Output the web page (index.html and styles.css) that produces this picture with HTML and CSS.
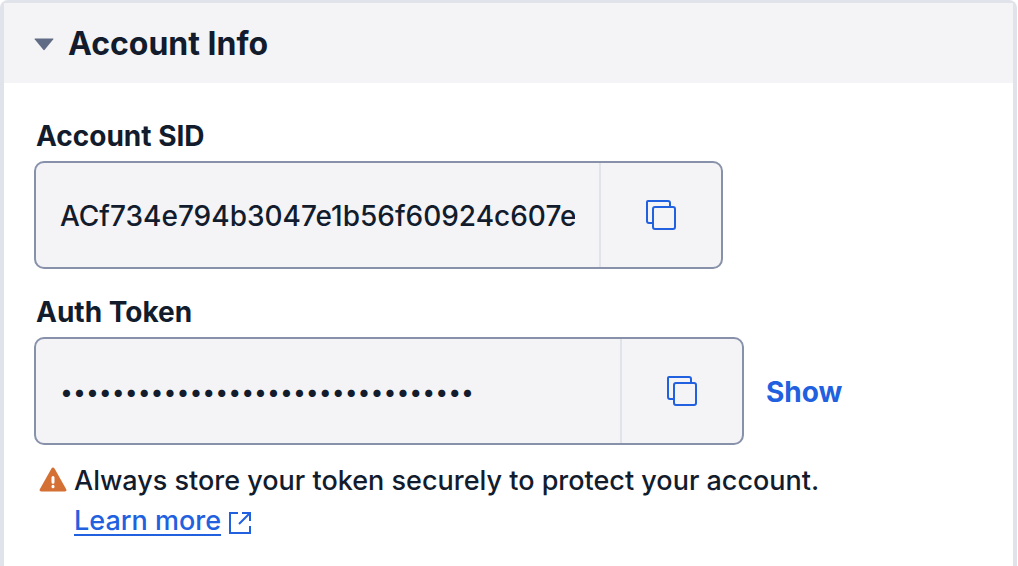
FILE: index.html
```html
<!DOCTYPE html>
<html lang="en">
<head>
<meta charset="utf-8">
<meta name="viewport" content="width=device-width, initial-scale=1">
<title>Account Info</title>
<link rel="stylesheet" href="styles.css">
</head>
<body>
<main class="card">
  <header class="card-header">
    <button class="toggle" type="button" aria-expanded="true" aria-label="Collapse Account Info">
      <svg width="20" height="13" viewBox="0 0 20 13"><path d="M1 .5h18q.8 0 .3.7l-8.6 10.6q-.7.8-1.4 0L.7 1.2Q.2.5 1 .5z" fill="#606b85"/></svg>
    </button>
    <h1 class="card-title">Account Info</h1>
  </header>
  <div class="card-body">
    <div class="field">
      <label class="label" for="sid">Account SID</label>
      <div class="copy-box">
        <input class="value value-sid" id="sid" type="text" readonly value="ACf734e794b3047e1b56f60924c607e">
        <button class="copy" type="button" aria-label="Copy Account SID">
          <svg width="32" height="32" viewBox="0 0 32 32" fill="none" stroke="#2160df" stroke-width="2"><path d="M7 24H4a2 2 0 0 1-2-2V3a1 1 0 0 1 1-1h20a2 2 0 0 1 2 2v3"/><rect x="8" y="8" width="22" height="22" rx="2"/></svg>
        </button>
      </div>
    </div>
    <div class="field">
      <label class="label" for="token">Auth Token</label>
      <div class="field-row">
        <div class="copy-box">
          <input class="value value-token" id="token" type="text" readonly value="••••••••••••••••••••••••••••••••">
          <button class="copy" type="button" aria-label="Copy Auth Token">
            <svg width="32" height="32" viewBox="0 0 32 32" fill="none" stroke="#2160df" stroke-width="2"><path d="M7 24H4a2 2 0 0 1-2-2V3a1 1 0 0 1 1-1h20a2 2 0 0 1 2 2v3"/><rect x="8" y="8" width="22" height="22" rx="2"/></svg>
          </button>
        </div>
        <button class="show" type="button">Show</button>
      </div>
    </div>
    <div class="notice">
      <svg class="warning" width="28" height="26" viewBox="0 0 28 26"><path d="M12.3 1.8q1.7-2.6 3.4 0l11.5 20.4q1 2.3-1.4 2.3H2.2q-2.4 0-1.4-2.3z" fill="#d47033"/><path d="M14 10.5v4.8M14 19.3v.4" stroke="#fff" stroke-width="3" stroke-linecap="round"/></svg>
      <p class="notice-text">Always store your token securely to protect your account.<br>
        <a class="link" href="#"><span class="link-text">Learn more</span><svg class="external" width="24" height="24" viewBox="0 0 24 24" fill="none" stroke="#2160df" stroke-width="2"><path d="M10 2H2v20h20v-7M14 2h8v8M22 2 11 13"/></svg></a></p>
    </div>
  </div>
</main>
</body>
</html>
```
FILE: styles.css
```css
* {
  box-sizing: border-box;
}

body {
  margin: 0;
  background: #fff;
  color: #121c2d;
  font-family: Inter, "Liberation Sans", sans-serif;
  font-size: 28px;
  line-height: 40px;
}

button,
input {
  margin: 0;
  padding: 0;
  border: 0;
  background: transparent;
  color: inherit;
  font: inherit;
}

button {
  cursor: pointer;
}

svg {
  display: block;
  flex: none;
}

.card {
  min-height: 100vh;
  margin-right: 1px;
  border: 4px solid #e1e3ea;
  border-top-width: 3px;
  border-bottom: 0;
  border-radius: 8px 8px 0 0;
}

.card-header {
  display: flex;
  align-items: center;
  gap: 14px;
  height: 80px;
  padding: 2px 30px 0;
  background: #f4f4f6;
}

.card-title {
  margin: 0;
  font-size: 32px;
  font-weight: 650;
}

.card-body {
  padding: 33px 30px 0;
}

.field {
  margin-bottom: 23px;
}

.field:nth-child(2) {
  margin-bottom: 16px;
}

.label {
  display: block;
  margin-bottom: 5px;
  padding-left: 2px;
  font-weight: 650;
}

.field-row {
  display: flex;
  align-items: center;
  gap: 22px;
}

.copy-box {
  display: flex;
  width: fit-content;
  height: 108px;
  overflow: hidden;
  border: 2px solid #8891aa;
  border-radius: 10px;
  background: #f4f4f6;
}

.value {
  padding: 2px 24px 0;
  font-weight: 500;
}

.value-sid {
  width: 563px;
}

.value-token {
  width: 584px;
  font-size: 23px;
  font-weight: 400;
}

.copy {
  display: grid;
  place-items: center;
  width: 122px;
  border-left: 2px solid #e1e3ea;
}

.show,
.link {
  color: #2160df;
}

.show {
  padding-top: 2px;
  font-weight: 650;
}

.notice {
  display: flex;
  gap: 7px;
  padding-left: 5px;
  font-size: 27px;
  font-weight: 450;
}

.warning {
  margin-top: 6px;
}

.notice-text {
  margin: 0;
}

.link {
  display: inline-flex;
  align-items: center;
  gap: 7px;
  text-decoration: none;
}

.link-text {
  text-decoration: underline;
  text-decoration-thickness: 2px;
  text-underline-offset: 4px;
}

.external {
  margin-top: 4px;
}
```
